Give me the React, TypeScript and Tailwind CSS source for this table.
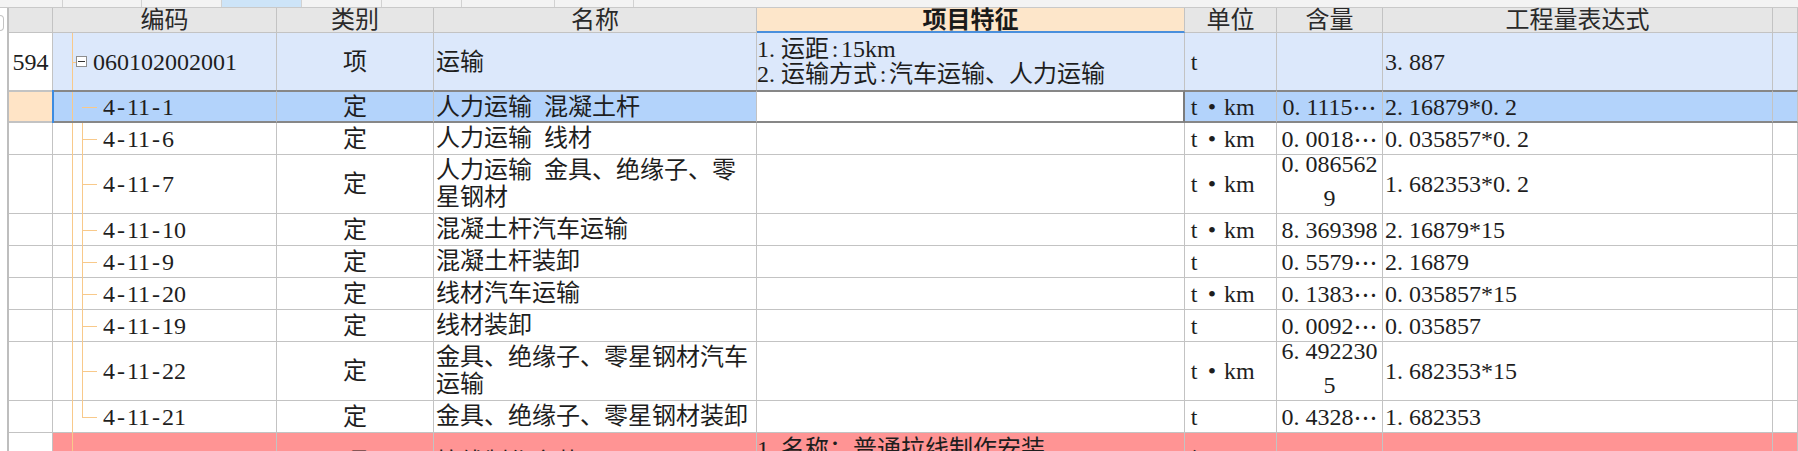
import React from "react";

/* ---------------- layout constants ---------------- */
const GRID =
  "grid grid-rows-1 grid-cols-[44px_224px_157px_323px_428px_92px_106px_390px_1fr]";
const LINE = "border-[#c3c3c3]";
const TREE = "bg-[#f8c98a]";
const SEL =
  "border-t-2 border-b-2 border-t-[#878787] border-b-[#878787] border-r border-r-[#c3c3c3]";

/* SimSun-like half width punctuation */
const Txt = ({ s }: { s: string }) => (
  <>
    {Array.from(s).map((c, i) => {
      if (c === ".")
        return (
          <span key={i} className="inline-block w-[12px]">
            .
          </span>
        );
      if (c === ":" || c === " " || c === "t" || c === "-")
        return (
          <span key={i} className="inline-block w-[12px] text-center">
            {c}
          </span>
        );
      if (c === "•")
        return (
          <span key={i} className="inline-block w-[24px] text-center">
            •
          </span>
        );
      if (c === "…")
        return (
          <span
            key={i}
            className="inline-block w-[24px] text-center font-['Noto_Sans_CJK_SC',sans-serif]"
          >
            …
          </span>
        );
      return c;
    })}
  </>
);

const MinusBox = () => (
  <span className="w-[11px] h-[11px] shrink-0 border border-[#8e8e8e] bg-white flex items-center justify-center">
    <span className="w-[7px] h-px bg-[#333]" />
  </span>
);

/* ---------------- data ---------------- */
interface Row {
  code: string;
  kind: string;
  name: string;
  unit: string;
  qty: string | [string, string];
  expr: string;
  tall?: boolean;
  last?: boolean;
}

const rows: Row[] = [
  { code: "4-11-6", kind: "定", name: "人力运输 线材", unit: "t•km", qty: "0.0018…", expr: "0.035857*0.2" },
  { code: "4-11-7", kind: "定", name: "人力运输 金具、绝缘子、零星钢材", unit: "t•km", qty: ["0.086562", "9"], expr: "1.682353*0.2", tall: true },
  { code: "4-11-10", kind: "定", name: "混凝土杆汽车运输", unit: "t•km", qty: "8.369398", expr: "2.16879*15" },
  { code: "4-11-9", kind: "定", name: "混凝土杆装卸", unit: "t", qty: "0.5579…", expr: "2.16879" },
  { code: "4-11-20", kind: "定", name: "线材汽车运输", unit: "t•km", qty: "0.1383…", expr: "0.035857*15" },
  { code: "4-11-19", kind: "定", name: "线材装卸", unit: "t", qty: "0.0092…", expr: "0.035857" },
  { code: "4-11-22", kind: "定", name: "金具、绝缘子、零星钢材汽车运输", unit: "t•km", qty: ["6.492230", "5"], expr: "1.682353*15", tall: true },
  { code: "4-11-21", kind: "定", name: "金具、绝缘子、零星钢材装卸", unit: "t", qty: "0.4328…", expr: "1.682353", last: true },
];

/* ---------------- pieces ---------------- */
const TopStrip = () => (
  <div className="flex h-[8px] bg-[#f3f3f3] border-b border-[#c9c9c9]">
    <div className="w-[63px] border-r border-[#d2d2d2]" />
    <div className="w-[79px] border-r border-[#d2d2d2]" />
    <div className="w-[80px] border-r border-[#d2d2d2]" />
    <div className="w-[80px] border-r border-[#d2d2d2] bg-[#cde4f8]" />
    <div className="w-[80px] border-r border-[#d2d2d2]" />
    <div className="w-[80px] border-r border-[#d2d2d2]" />
    <div className="w-[93px] border-r border-[#d2d2d2]" />
    <div className="w-[79px] border-r border-[#d2d2d2]" />
  </div>
);

const Header = () => (
  <div className={`${GRID} h-[25px] bg-[#e6e6e6] text-[#2a2a2a]`}>
    <div className={`border-r border-b ${LINE}`} />
    <div className={`flex items-center justify-center border-r border-b ${LINE}`}>编码</div>
    <div className={`flex items-center justify-center border-r border-b ${LINE}`}>类别</div>
    <div className={`flex items-center justify-center border-r border-b ${LINE}`}>名称</div>
    <div className={`flex items-center justify-center font-bold text-[#1a1a1a] bg-[#fde6ca] border-r ${LINE} border-b-2 border-b-[#4a8fdc]`}>
      项目特征
    </div>
    <div className={`flex items-center justify-center border-r border-b ${LINE}`}>单位</div>
    <div className={`flex items-center justify-center border-r border-b ${LINE}`}>含量</div>
    <div className={`flex items-center justify-center border-r border-b ${LINE}`}>工程量表达式</div>
    <div className={`border-r border-b ${LINE}`} />
  </div>
);

const ItemRow = () => (
  <div className={`${GRID} h-[57px] bg-[#dce8fb]`}>
    <div className={`bg-white flex items-center justify-center border-r ${LINE}`}>
      <Txt s="594" />
    </div>
    <div className={`relative flex items-center pl-[23px] border-r ${LINE}`}>
      <span className={`absolute left-[19px] top-0 bottom-0 w-px ${TREE}`} />
      <span className={`absolute left-[19px] top-1/2 w-[4px] h-px ${TREE}`} />
      <MinusBox />
      <span className="ml-[6px]">
        <Txt s="060102002001" />
      </span>
    </div>
    <div className={`flex items-center justify-center border-r ${LINE}`}>项</div>
    <div className={`flex items-center pl-[2px] border-r ${LINE}`}>运输</div>
    <div className={`flex flex-col justify-center leading-[25px] border-r ${LINE}`}>
      <div>
        <Txt s="1.运距:15km" />
      </div>
      <div>
        <Txt s="2.运输方式:汽车运输、人力运输" />
      </div>
    </div>
    <div className={`flex items-center pl-[3px] border-r ${LINE}`}>
      <Txt s="t" />
    </div>
    <div className={`border-r ${LINE}`} />
    <div className={`flex items-center pl-[2px] border-r ${LINE}`}>
      <Txt s="3.887" />
    </div>
    <div className={`border-r ${LINE}`} />
  </div>
);

const SelectedRow = () => (
  <div className={`${GRID} h-[33px] bg-[#b3d3fb]`}>
    <div className={`bg-[#ffe4c6] border-t-2 border-b-2 border-r ${LINE}`} />
    <div className={`relative flex items-center pl-[50px] ${SEL}`}>
      <span className="absolute -left-px -top-[2px] -bottom-[2px] w-[2px] bg-[#3d8be0]" />
      <span className={`absolute left-[19px] top-0 bottom-0 w-px ${TREE}`} />
      <span className={`absolute left-[29px] top-1/2 w-[15px] h-px ${TREE}`} />
      <Txt s="4-11-1" />
    </div>
    <div className={`flex items-center justify-center ${SEL}`}>定</div>
    <div className={`flex items-center pl-[2px] ${SEL}`}>
      <Txt s="人力运输 混凝土杆" />
    </div>
    <div className="bg-white border-t-2 border-b-2 border-t-[#878787] border-b-[#878787] border-r-2 border-r-[#7c7c7c]" />
    <div className={`flex items-center pl-[3px] ${SEL}`}>
      <Txt s="t•km" />
    </div>
    <div className={`flex items-center justify-center ${SEL}`}>
      <Txt s="0.1115…" />
    </div>
    <div className={`flex items-center pl-[2px] ${SEL}`}>
      <Txt s="2.16879*0.2" />
    </div>
    <div className={SEL} />
  </div>
);

const ChildRow = ({ r }: { r: Row }) => (
  <div className={`${GRID} ${r.tall ? "h-[59px]" : "h-[32px]"} bg-white`}>
    <div className={`border-r border-b ${LINE}`} />
    <div className={`relative flex items-center pl-[50px] border-r border-b ${LINE}`}>
      <span className={`absolute left-[19px] top-0 -bottom-px w-px ${TREE}`} />
      <span
        className={`absolute left-[29px] top-0 w-px ${TREE} ${
          r.last ? "h-1/2" : "-bottom-px"
        }`}
      />
      <span className={`absolute left-[29px] top-1/2 w-[15px] h-px ${TREE}`} />
      <Txt s={r.code} />
    </div>
    <div className={`flex items-center justify-center border-r border-b ${LINE}`}>
      {r.kind}
    </div>
    <div className={`flex items-center pl-[2px] border-r border-b ${LINE} leading-[27px]`}>
      <div>
        <Txt s={r.name} />
      </div>
    </div>
    <div className={`border-r border-b ${LINE}`} />
    <div className={`flex items-center pl-[3px] border-r border-b ${LINE}`}>
      <Txt s={r.unit} />
    </div>
    {Array.isArray(r.qty) ? (
      <div
        className={`min-h-0 flex flex-col items-center justify-center gap-[16px] leading-[18px] pb-[7px] border-r border-b ${LINE}`}
      >
        <div>
          <Txt s={r.qty[0]} />
        </div>
        <div>
          <Txt s={r.qty[1]} />
        </div>
      </div>
    ) : (
      <div className={`flex items-center justify-center border-r border-b ${LINE}`}>
        <Txt s={r.qty} />
      </div>
    )}
    <div className={`flex items-center pl-[2px] border-r border-b ${LINE}`}>
      <Txt s={r.expr} />
    </div>
    <div className={`border-r border-b ${LINE}`} />
  </div>
);

const RedRow = () => (
  <div className={`${GRID} h-[59px] bg-[#ff9494]`}>
    <div className={`bg-white border-r border-b ${LINE}`} />
    <div className={`relative flex items-center pl-[23px] border-r border-b ${LINE}`}>
      <span className={`absolute left-[19px] top-0 bottom-0 w-px ${TREE}`} />
      <span className={`absolute left-[19px] top-1/2 w-[4px] h-px ${TREE}`} />
      <MinusBox />
      <span className="ml-[6px]">
        <Txt s="060102003001" />
      </span>
    </div>
    <div className={`flex items-center justify-center border-r border-b ${LINE}`}>项</div>
    <div className={`flex items-center pl-[2px] border-r border-b ${LINE}`}>拉线制作安装</div>
    <div className={`flex flex-col justify-center leading-[25px] border-r border-b ${LINE}`}>
      <div>
        <Txt s="1.名称：普通拉线制作安装" />
      </div>
      <div>
        <Txt s="2.规格：GJ-35" />
      </div>
    </div>
    <div className={`flex items-center pl-[3px] border-r border-b ${LINE}`}>组</div>
    <div className={`border-r border-b ${LINE}`} />
    <div className={`flex items-center pl-[2px] border-r border-b ${LINE}`}>
      <Txt s="1" />
    </div>
    <div className={`border-r border-b ${LINE}`} />
  </div>
);

export default function App() {
  return (
    <div className="w-[1798px] h-[451px] overflow-hidden bg-white font-['Liberation_Serif','Noto_Sans_CJK_SC',serif] text-[24px] leading-[24px] text-[#1e1e1e]">
      <TopStrip />
      <div className="flex">
        <div className="w-[7px] shrink-0 pt-[7px]">
          <div className="w-[4px] h-[16px] rounded-r-[4px] border border-l-0 border-[#c4c4c4]" />
        </div>
        <div className="flex-1 min-w-0 border-l-2 border-[#bebebe]">
          <Header />
          <ItemRow />
          <SelectedRow />
          {rows.map((r) => (
            <ChildRow key={r.code} r={r} />
          ))}
          <RedRow />
        </div>
      </div>
    </div>
  );
}
